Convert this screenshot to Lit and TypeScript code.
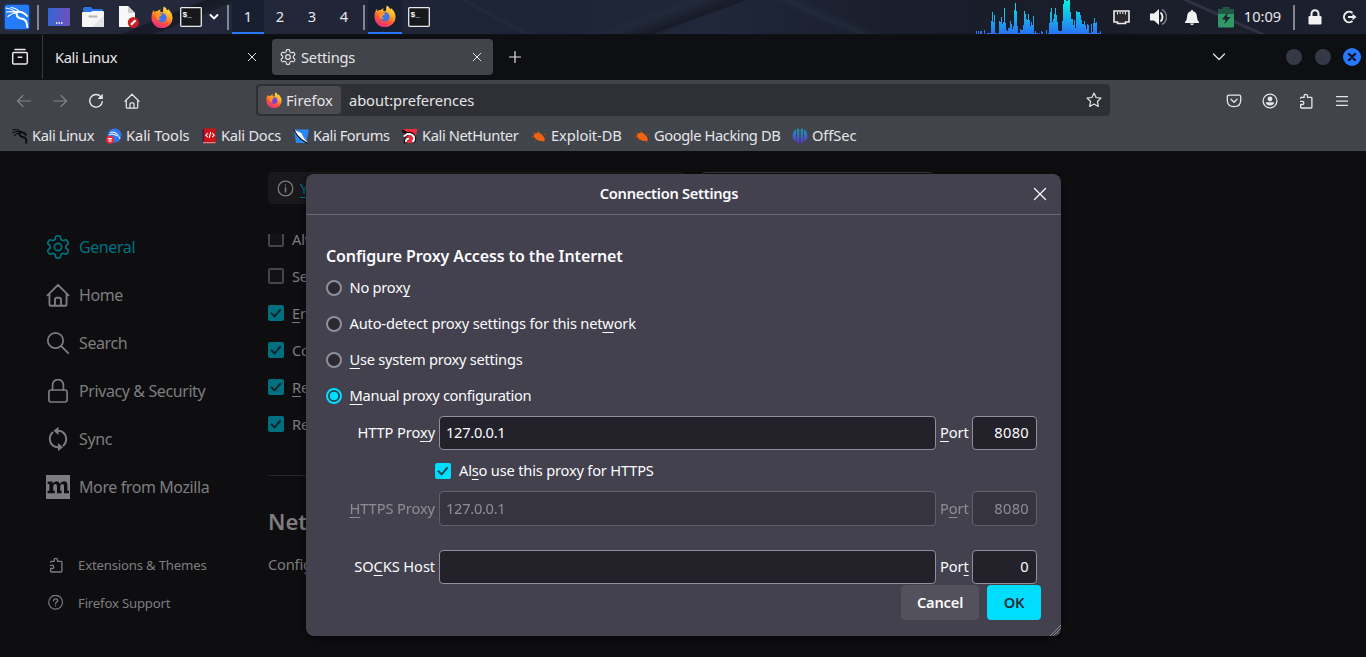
import { LitElement, html, css, svg } from "lit";
import { customElement } from "lit/decorators.js";

// Closed outline of a six-toothed gear, centred on (12, 12).
const gearPath = (() => {
  const pts: string[] = [];
  for (let i = 0; i < 120; i++) {
    const a = (i / 120) * Math.PI * 2 - Math.PI / 2;
    const c = Math.cos(6 * (a + Math.PI / 2));
    const r = 9.5 + 1.6 * Math.tanh(2.6 * (c + 0.1));
    pts.push(`${(12 + r * Math.cos(a)).toFixed(2)} ${(12 + r * Math.sin(a)).toFixed(2)}`);
  }
  return "M" + pts.join("L") + "Z";
})();

const icon = (size: number, body: unknown, box = 16) =>
  html`<svg class="ic" width=${size} height=${size} viewBox="0 0 ${box} ${box}" fill="none" stroke="currentColor" stroke-width="1.4" stroke-linecap="round" stroke-linejoin="round">${body}</svg>`;

const gear = svg`<path d=${gearPath} stroke-width="1.7"/><circle cx="12" cy="12" r="3.6" stroke-width="1.7"/>`;
const house = svg`<path d="M1 8.2 8 1.2l7 7M2.3 7v7.3q0 .9.9.9h9.6q.9 0 .9-.9V7M6 15v-4q0-1.2 1.2-1.2h1.6Q10 9.8 10 11v4" stroke-width="1.25"/>`;
const puzzle = svg`<path d="M2.6 5.2q0-.8.8-.8H6.1V3a1.7 1.7 0 0 1 3.4 0v1.4h3.6q.8 0 .8.8v9q0 .8-.8.8H3.4q-.8 0-.8-.8v-2.7h1.7a1.5 1.5 0 0 0 0-3.1H2.6" stroke-width="1.3"/>`;
const cross = svg`<path d="m3.6 3.6 8.8 8.8m0-8.8-8.8 8.8" stroke-width="1"/>`;
const tabCross = svg`<path d="m4.2 4.2 7.600 7.600m0-7.600-7.600 7.600" stroke-width="1"/>`;
const tick = svg`<path d="m3.6 8.4 3 3 5.6-6.6" stroke-width="2"/>`;
const dragon = svg`<path d="M.6 1.600q5.500-.6 8.400 2M.4 4.800q4-2 8-.8M2 7.800q2.600-3 6-2.600" stroke-width="1.100"/><path d="M7.500 4.500q-.6 3.200 2 4.200 4.300.5 4.800 3.300.2 1.800-.3 3.500M8 4q4 .1 6.500 3.300" stroke-width="1.900"/>`;

const firefox = (size: number) => html`<svg class="ic" width=${size} height=${size} viewBox="0 0 24 24">
  <defs>
    <linearGradient id="fx" x1=".8" y1="0" x2=".3" y2="1"><stop offset="0" stop-color="#ffe84a"/><stop offset=".38" stop-color="#ffab28"/><stop offset=".65" stop-color="#ff5a32"/><stop offset="1" stop-color="#e6278b"/></linearGradient>
  </defs>
  <path d="M14 .5c2 1.200 3.200 2.700 3.800 4.400.6-.2.8-.8.8-1.500 3 2.700 5 6 4.900 9.600A11.500 11 0 0 1 .5 13.500C.4 9.500 1.300 6.600 3 4.300l.8 2.200c1-.9 2.200-1.200 3.500-1 .8-1 1.900-1.700 3.100-2l-.6 2.400c1.500.2 2.400.8 2.700 1.300C13.500 5.800 13 2.500 14 .5Z" fill="url(#fx)"/>
  <circle cx="12" cy="12.800" r="5" fill=${size > 16 ? "#3f74ea" : "#7a3fe0"}/><path d="M4.500 8.500c2-1.500 5-1 7.500 1-.3 1.700-2.200 1.300-3 2.500-.4 1.400.5 2.500 1.800 3-2.800 1.400-6.300-2-6.300-6.500Z" fill="#ff9329"/>
</svg>`;

const terminal = html`<svg class="ic" width="22" height="20" viewBox="0 0 22 20"><rect x=".7" y=".7" width="20.600" height="18.600" rx=".8" fill="#17181b" stroke="#e9e9e9" stroke-width="1.300"/><text x="2.500" y="10" font-size="8" font-weight="700" font-family="Liberation Mono, monospace" fill="#fff">$_</text></svg>`;

const GRAPH = [
  3, 0, 3, 0, 3, 3, 0, 0, 4, 0, 0, 1, 1, 1, 1, 13, 22, 12, 19, 1, 1, 0, 1, 13, 12, 17, 10, 12, 26, 11, 4, 3, 6, 6, 13,
  10, 5, 8, 24, 31, 23, 8, 1, 1, 5, 4, 4, 9, 23, 20, 15, 14, 20, 14, 8, 12, 9, 18, 1, 3, 1, 1, 0, 1, 0, 3, 2, 0, 0, 0,
  4, 0, 1, 11, 22, 26, 12, 15, 20, 26, 19, 12, 4, 3, 3, 3, 13, 30, 34, 34, 34, 34, 34, 34, 22, 15, 15, 9, 14, 6, 23,
  22, 22, 22, 19, 14, 10, 10, 13, 9, 5, 10, 9, 1, 1, 10, 2, 11, 16, 11, 12, 1, 1, 1, 3,
];

const base = css`
  :host { display: block; font-family: "Noto Sans", "Open Sans", sans-serif; font-size: 14.67px; line-height: 20px; letter-spacing: -.2px; }
  * { box-sizing: border-box; }
  .ic { display: block; flex: none; }
  .t { padding-bottom: 2px; }
  .tight { letter-spacing: -.4px; }
  .loose { letter-spacing: -.08px; }
`;

@customElement("desktop-panel")
class DesktopPanel extends LitElement {
  static styles = [base, css`
    .bar { height: 35px; display: grid; align-items: center; justify-items: center; color: #e6e7ea; letter-spacing: 0;
      grid-template-columns: 34px 8px 34px 34px 36px 32px 26px 20px 8px repeat(4, 32px) 8px 34px 34px 1fr 125px 40px 34px 34px 34px 39px 24px 18px 42px;
      border-bottom: 1px solid #101218;
      background:
        linear-gradient(158deg, transparent 48%, #171a25 50%, #1a1e2a 60%, transparent 62%) 70px 0 / 190px 35px no-repeat,
        linear-gradient(28deg, transparent 48%, #39404f33 50%, transparent 54%) 420px 0 / 150px 35px no-repeat,
        linear-gradient(160deg, transparent 40%, #2b344633 46%, #171b26 60%, transparent 62%) 560px 0 / 210px 35px no-repeat,
        linear-gradient(24deg, transparent 44%, #343b4c44 50%, transparent 58%) 740px 0 / 170px 35px no-repeat,
        linear-gradient(204deg, transparent 47%, #59607066 50%, transparent 53%) 1170px 0 / 110px 35px no-repeat,
        linear-gradient(90deg, #252a3a, #22273a 18%, #1d2435 38%, #202739 52%, #191e2c 66%, #1a1d29 80%, #1c2130); }
    .sep { width: 2px; height: 25px; background: #83868e; }
    .ws { align-self: stretch; width: 100%; display: grid; place-items: center; padding-bottom: 2px; }
    .on { background: #171f31; box-shadow: inset 0 -2px #2777ff; }
    .graph { align-self: start; }
    .out { justify-self: start; margin-left: 18px; }
    .doc { margin-left: 1px; }
  `];
  render() {
    return html`<div class="bar">
      <svg class="ic" width="28" height="28" viewBox="0 0 28 28"><defs><filter id="g"><feGaussianBlur stdDeviation="1.200"/></filter></defs><rect x="2" y="2" width="24" height="24" rx="2" fill="#1765e8" filter="url(#g)"/><rect x="2" y="2" width="24" height="24" rx="1.500" fill="#247cfc"/><g fill="none" stroke="#fff" stroke-linecap="round"><path d="M3 5q6 .8 10 4M3.500 9q5-1 9.500.5M5 13.500q4-3.500 8.500-3.500M8 4.500q5 .5 8 4" stroke-width="1.200"/><path d="M14 9q-1.500 5 3 6.200 5.500.6 6.500 4.300.6 2.500.8 4.500M14 8.700q6.500-.6 10 4.300" stroke-width="2"/></g></svg>
      <span class="sep"></span>
      <svg class="ic" width="22" height="18" viewBox="0 0 22 18"><defs><linearGradient id="d"><stop stop-color="#3465d6"/><stop offset="1" stop-color="#7050bd"/></linearGradient></defs><rect width="22" height="18" rx="1" fill="url(#d)"/><path d="M8 15h1.500m1 0H12m1 0h1.500" stroke="#fff" stroke-width="1.300"/></svg>
      <svg class="ic" width="22" height="20" viewBox="0 0 22 20"><path d="M1 8V1.500Q1 0 2.500 0H9l2 2h8.500Q21 2 21 3.500V8Z" fill="#2b73e0"/><path d="M0 6q0-1 1-1h8l1.500-1H21q1 0 1 1v14q0 1-1 1H1q-1 0-1-1Z" fill="#f6f6f6"/><path d="M22 8v11q0 1-1 1H10Z" fill="#e4e4e4"/><path d="M7.500 9.500h7" stroke="#b4b4b4" stroke-width="2" stroke-linecap="round"/></svg>
      <svg class="ic doc" width="21" height="22" viewBox="0 0 21 22"><path d="M1 0h9l7 7v14H1Z" fill="#f7f7f7"/><path d="m10 0 7 7h-7Z" fill="#cecece"/><circle cx="15.300" cy="16.500" r="5.500" fill="#c92028"/><path d="m13 18.800 4.600-4.600" stroke="#fff" stroke-width="2.200"/></svg>
      ${firefox(22)}${terminal}
      <svg class="ic" width="10" height="8" viewBox="0 0 10 8"><path d="m1.500 2 3.500 3.500L8.500 2" stroke="#fff" fill="none" stroke-width="1.900" stroke-linecap="round"/></svg>
      <span class="sep"></span>
      <span class="ws on">1</span><span class="ws">2</span><span class="ws">3</span><span class="ws">4</span>
      <span class="sep"></span>
      <span class="ws on">${firefox(22)}</span>${terminal}
      <span></span>
      <svg class="ic graph" width="125" height="34" viewBox="0 0 125 34" shape-rendering="crispEdges"><defs><linearGradient id="b" gradientUnits="userSpaceOnUse" x1="0" y1="0" x2="0" y2="34"><stop stop-color="#00f5e0"/><stop offset="1" stop-color="#2a72f5"/></linearGradient></defs><g fill="url(#b)">${GRAPH.map((h, i) => svg`<rect x=${i} y=${34 - h} width="1" height=${h}/>`)}</g><rect x="90" width="2" height="1" fill="#173244"/></svg>
      <svg class="ic" width="17" height="15" viewBox="0 0 17 15"><path d="M1 1h15v11h-3.500v1.500h-8V12H1Z" fill="#29272c" stroke="#eee" stroke-width="1.600"/><path d="M4.500 2v2.500m2.600-2.500v2m2.700-2v2m2.600-2v2.500" stroke="#eee" stroke-width="1"/></svg>
      <svg class="ic" width="17" height="18" viewBox="0 0 17 18"><path d="M0 5.500h4L9 1v16l-5-4.500H0Z" fill="#f2f2f2"/><path d="M10.500 4.500a6 6 0 0 1 0 9" stroke="#f2f2f2" stroke-width="1.900" fill="none"/><path d="M12 1.500a8.500 8.500 0 0 1 0 15" stroke="#777b83" stroke-width="1.600" fill="none"/></svg>
      <svg class="ic" width="16" height="17" viewBox="0 0 16 17"><path d="M8 1q1.200 0 1.300 1.200Q12.800 3 12.900 7.500q.1 4 2.100 5.500v.9H1V13q2-1.500 2.100-5.500Q3.200 3 6.700 2.200 6.800 1 8 1Zm-2 13.600h4q-.5 1.500-2 1.500t-2-1.500Z" fill="#f2f2f2"/></svg>
      <svg class="ic" width="16" height="21" viewBox="0 0 16 21"><path d="M4.500 0h7v2H16v6H0V2h4.500Z" fill="#1f5843"/><path d="M0 7h16v12.500q0 1-1 1H1q-1 0-1-1Z" fill="#2f9865"/><path d="M9.500 5.500 4 12.500h3.500L6.500 17 12.500 10H9Z" fill="#1c2230"/></svg>
      <span class="t">10:09</span><span class="sep"></span>
      <svg class="ic" width="14" height="16" viewBox="0 0 14 16"><path d="M3.500 7V4.800a3.500 3.500 0 0 1 7 0V7" fill="none" stroke="#f2f2f2" stroke-width="2"/><rect x=".5" y="7" width="13" height="8.500" rx="1.200" fill="#f2f2f2"/></svg>
      <svg class="ic out" width="16" height="14" viewBox="0 0 16 14"><path d="M10.500 3A5.200 5.200 0 1 0 10.500 11" fill="none" stroke="#eee" stroke-width="2"/><path d="M6 6h4.500V3.800L14.500 7l-4 3.200V8H6Z" fill="#eee"/></svg>
    </div>`;
  }
}

@customElement("browser-chrome")
class BrowserChrome extends LitElement {
  static styles = [base, css`
    :host { color: #e6e6e8; }
    .tabs { height: 45px; background: #0e0f13; display: grid; align-items: center; grid-template-columns: 42px 1px 229px 221px 44px 1fr 42px 126px; padding-bottom: 1px; }
    .tabs > .ic, .nav > .ic { justify-self: center; }
    .tabs > .all { margin-right: 2px; }
    .line { align-self: stretch; background: #38393d; }
    .tab { height: 36px; display: flex; align-items: center; border-radius: 4px; }
    .first { padding: 0 12px; justify-content: space-between; }
    .current { background: #42444b; padding: 0 8px; gap: 5px; }
    .grow { flex: 1; }
    .wm { display: flex; justify-content: flex-end; align-items: center; gap: 12.5px; padding-right: 5px; }
    .dot { width: 16px; height: 16px; border-radius: 50%; background: #353946; }
    .nav { height: 41px; background: #42444b; display: grid; align-items: center; padding-left: 6px; grid-template-columns: repeat(4, 36px) 106px 854px 106px repeat(4, 36px); }
    .off { color: #828389; }
    .url { height: 32px; background: #2f3035; border-radius: 4px; display: flex; align-items: center; padding: 0 8px 0 2px; margin-top: -1px; letter-spacing: -.06px; }
    .id { background: #4b4a50; width: 83px; height: 28px; border-radius: 3px; display: flex; align-items: center; gap: 4px; padding-left: 8px; margin-right: 8px; letter-spacing: 0; }
    .marks { height: 30px; background: #42444b; display: grid; padding-left: 12px; grid-template-columns: 94px 95px 92px 109px 129px 103px 158px 1fr; }
    .mark { display: flex; align-items: center; gap: 4px; white-space: nowrap; }
    .snug { letter-spacing: -.25px; }
  `];
  render() {
    const bug = icon(16, svg`<path d="m2 5 3 1M1 9l3.500-.5M4 13l2-2M7 3l1 2.500M13 6.500l2-.5M12 13l1 1.500" stroke="#a84a12" stroke-width="1"/><path d="M2.500 7.500Q6 3 9.500 5.500q4 2.500 4.500 7-5 1.500-8-1-3-2-3.500-4Z" fill="#f0640f" stroke="none"/>`);
    const shield = html`<svg class="ic" width="16" height="16" viewBox="0 0 16 16"><path d="M.8 1.500H16l-2.800 13.500H3Z" fill="#2b86f6"/><path d="m1.500 2 7 3.200 2.500 5 4.500 5-6-3.500L4.500 7.500Z" fill="#fff"/><path d="m.8 1.500 3.500 6 4 4 6.500 4" stroke="#15171b" stroke-width="1.100" fill="none"/></svg>`;
    return html`
      <div class="tabs">
        <svg class="ic all" width="18" height="18" viewBox="0 0 18 18" fill="none" stroke="currentColor" stroke-width="1.500" stroke-linecap="round"><path d="M4 1.500h10M2.800 4.600h12.400q1.100 0 1.100 1.100v8.700q0 1.700-1.700 1.700H3.400q-1.700 0-1.700-1.700V5.700q0-1.100 1.100-1.100ZM7.200 9.200h3.600"/></svg>
        <span class="line"></span>
        <div class="tab first"><span class="tight">Kali Linux</span>${icon(16, tabCross)}</div>
        <div class="tab current">${icon(16, gear, 24)}<span class="grow">Settings</span>${icon(16, tabCross)}</div>
        ${icon(16, svg`<path d="M8 2.500v11M2.500 8h11" stroke-width="1.200"/>`)}
        <span></span>
        ${icon(16, svg`<path d="m2.500 5 5.500 5.500L13.500 5" stroke-width="1.200"/>`)}
        <div class="wm"><span class="dot"></span><span class="dot"></span>
          <svg class="ic" width="18" height="18" viewBox="0 0 18 18"><circle cx="9" cy="9" r="9" fill="#2777ff"/><path d="m6 6 6 6m0-6-6 6" stroke="#0c1220" stroke-width="2.400" stroke-linecap="round"/></svg></div>
      </div>
      <div class="nav">
        <svg class="ic off" width="16" height="16" viewBox="0 0 16 16" fill="none" stroke="currentColor" stroke-width="1.200" stroke-linecap="round"><path d="M1.500 8h13M7 2.500 1.500 8 7 13.500"/></svg>
        <svg class="ic off" width="16" height="16" viewBox="0 0 16 16" fill="none" stroke="currentColor" stroke-width="1.200" stroke-linecap="round"><path d="M14.500 8h-13M9 2.500 14.500 8 9 13.500"/></svg>
        ${icon(16, svg`<path d="M12.800 3.700A6.300 6.300 0 1 0 14.300 8.600" stroke-width="1.400"/><path d="M14.800.8V6H9.600Z" fill="currentColor" stroke="none"/>`)}
        ${icon(16, house)}
        <span></span>
        <div class="url"><div class="id">${firefox(16)}<span>Firefox</span></div><span class="grow">about:preferences</span>
          ${icon(16, svg`<path d="m8 1 2.100 4.500 4.900.6-3.600 3.400.9 4.900L8 12l-4.300 2.400.9-4.900L1 6.100l4.900-.6Z" stroke-width="1.200"/>`)}</div>
        <span></span>
        ${icon(16, svg`<path d="M2.800 2.200h10.400q1.500 0 1.500 1.500v3.600q0 6.400-6.700 6.400T1.300 7.300V3.700q0-1.500 1.500-1.500ZM5 6.300 8 9.200l3-2.900" stroke-width="1.300"/>`)}
        ${icon(16, svg`<circle cx="8" cy="8" r="6.900" stroke-width="1.300"/><circle cx="8" cy="5.900" r="2.400" fill="currentColor" stroke="none"/><path d="M3.700 9.300h8.600q-.8 3.200-4.300 3.200T3.700 9.300Z" fill="currentColor" stroke="none"/>`)}
        ${icon(16, puzzle)}
        ${icon(16, svg`<path d="M2.500 3.700h11M2.500 8h11M2.500 12.300h11" stroke-width="1.250"/>`)}
      </div>
      <div class="marks">
        <span class="mark"><svg class="ic" width="16" height="16" viewBox="0 0 16 16" fill="none" stroke="#0c0d10">${dragon}</svg><span class="t tight">Kali Linux</span></span>
        <span class="mark"><svg class="ic" width="16" height="16" viewBox="0 0 16 16"><circle cx="8.500" cy="7.500" r="7" fill="#2b78ef"/><path d="M4 4.500q5-1 7 1.500t3 5M3 7q4-2 8 1" stroke="#d8e8ff" fill="none" stroke-width="1.200"/><circle cx="4" cy="11.700" r="4" fill="#ec2c3c"/><path d="M2 10.500h4M3.200 10.500V14m1.700-3.500V14" stroke="#fff" stroke-width=".9"/></svg><span class="t loose">Kali Tools</span></span>
        <span class="mark"><svg class="ic" width="16" height="16" viewBox="0 0 16 16"><rect x="1.500" y=".5" width="13" height="15" rx="1" fill="#d40f18"/><path d="M1.500 1v14h1.700V1Z" fill="#232a52"/><path d="M2 14.700h12.500" stroke="#b9bcc8" stroke-width=".9"/><path d="M6.800 5 4.800 7.200l2 1.900m4.400-4.100 2 2.200-2 1.900M9.700 4 8.200 10" stroke="#fff" fill="none" stroke-width="1.100"/></svg><span class="t snug">Kali Docs</span></span>
        <span class="mark">${shield}<span class="t tight">Kali Forums</span></span>
        <span class="mark"><svg class="ic" width="16" height="16" viewBox="0 0 16 16"><path d="M1 1h14.500L13 11l-2 4H4Z" fill="#ef2a3c"/><path d="m0 2.500 5 3M1.500 9 6 5.500q4.500-1 6.500 3.500 1 3.500-2 5.500M3.500 15q-1.500-4 3.500-4.500" stroke="#111" stroke-width="3" fill="none"/><path d="M1.500 8.500 5.500 6q4.500-.8 6.500 3 .8 3-1.500 5M4 14q-.5-3 3-3.500" stroke="#fff" stroke-width="1.900" fill="none"/></svg><span class="t tight">Kali NetHunter</span></span>
        <span class="mark">${bug}<span class="t loose">Exploit-DB</span></span>
        <span class="mark">${bug}<span class="t tight">Google Hacking DB</span></span>
        <span class="mark"><svg class="ic" width="16" height="16" viewBox="0 0 16 16"><defs><linearGradient id="o" gradientUnits="userSpaceOnUse" x1="0" y1="0" x2="0" y2="16"><stop stop-color="#159fae"/><stop offset="1" stop-color="#5b2fe0"/></linearGradient></defs><g fill="url(#o)"><path d="M4.100 1.600v11.800Q.6 11.500.6 7.500t3.500-5.900Z"/><rect x="4.900" y=".8" width="2.400" height="14.200" rx="1"/><rect x="8.700" y=".8" width="2.400" height="14.200" rx="1"/><path d="M11.900 1.600v11.800q3.500-1.900 3.500-5.900t-3.500-5.900Z"/></g></svg><span class="t loose">OffSec</span></span>
      </div>`;
  }
}

@customElement("settings-page")
class SettingsPage extends LitElement {
  static styles = [base, css`
    :host { height: 506px; overflow: hidden; background: #0e0e10; color: #7d7d7f; }
    .page { display: grid; grid-template-columns: 268px 665px; }
    .side { padding: 72px 0 0 46px; font-size: 16px; letter-spacing: -.4px; }
    .cat { height: 48px; display: flex; align-items: center; gap: 9px; }
    .sel { color: #007080; }
    .small { height: 38px; display: flex; align-items: center; gap: 14px; font-size: 13.2px; padding-left: 2px; letter-spacing: -.2px; }
    .links { margin-top: 35px; }
    .moz { width: 24px; height: 24px; background: #7d7d7f; }
    .top { display: flex; gap: 16px; margin-top: 21px; height: 32px; }
    .info { width: 417px; background: #19191b; border-radius: 4px; display: flex; align-items: center; gap: 6px; padding-left: 9px; color: #007080; text-decoration: underline; text-underline-offset: 3px; }
    .info .ic { color: #7d7d7f; }
    .find { width: 232px; border: 1px solid #39393d; border-radius: 4px; }
    .list { margin-top: 30px; height: 208px; overflow: hidden; display: flex; flex-direction: column; justify-content: flex-end; }
    .row { height: 37px; flex: none; display: flex; align-items: center; gap: 8px; }
    .box { width: 16px; height: 16px; border-radius: 2px; border: 2px solid #46454d; background: #131217; color: #10222a; flex: none; }
    .yes { border: 0; background: #007080; }
    u { text-underline-offset: 3px; text-decoration-thickness: 1px; }
    .rule { height: 1px; background: #252528; margin-top: 33px; }
    .h { font-size: 22px; font-weight: 600; line-height: 30px; margin: 30px 0 0; letter-spacing: 0; }
    .p { margin-top: 18px; }
  `];
  render() {
    const on = html`<span class="box yes">${icon(16, tick)}</span>`;
    const off = html`<span class="box"></span>`;
    return html`<div class="page">
      <nav class="side">
        <div class="cat sel">${icon(24, gear, 24)}General</div>
        <div class="cat">${icon(24, house)}Home</div>
        <div class="cat">${icon(24, svg`<circle cx="9.500" cy="9.500" r="7.700" stroke-width="1.700"/><path d="m15.200 15.200 7 7" stroke-width="1.900"/>`, 24)}Search</div>
        <div class="cat">${icon(24, svg`<rect x="2.900" y="11" width="18.200" height="12" rx="2.200" stroke-width="1.700"/><path d="M6.600 11V6a5.400 5.400 0 0 1 10.800 0v5" stroke-width="1.700"/>`, 24)}Privacy &amp; Security</div>
        <div class="cat">${icon(24, svg`<path d="M6.500 5.500Q3.800 8 3.800 12t3 6.500q2 1.700 5.200 1.700M17.500 18.500q2.700-2.500 2.700-6.500t-3-6.500q-2-1.700-5.200-1.700" stroke-width="1.900"/><path d="M12.500-.2v8.200L7.500 3.800ZM12 24.200V16l5 4.200Z" fill="currentColor" stroke="none"/>`, 24)}Sync</div>
        <div class="cat"><svg class="ic moz" viewBox="0 0 24 24"><path d="M1.600 6.500h5v2.300Q8 6.200 10.600 6.200q2.600 0 3.300 2.700Q15.200 6.200 18 6.200q3.400 0 3.400 4v5.500H23V18.300h-5v-7q0-2.300-1.400-2.300-2.300 0-2.300 3.200v3.500h1.300v2.600h-4.600v-7q0-2.300-1.400-2.300-2.400 0-2.400 3.200v3.500h1.600v2.600H1.600v-2.600h1.800V9.100H1.600Z" fill="#0e0e10"/></svg>More from Mozilla</div>
        <div class="links">
          <div class="small">${icon(16, puzzle)}Extensions &amp; Themes</div>
          <div class="small">${icon(16, svg`<circle cx="7.600" cy="7.200" r="6.900" stroke-width="1.200"/><path d="M5.500 5.900q.1-2 2.100-2t2.100 1.700q0 1-1.200 1.700-.9.500-.9 1.400m0 2v.1" stroke-width="1.300"/>`)}Firefox Support</div>
        </div>
      </nav>
      <main>
        <div class="top"><div class="info">${icon(17, svg`<circle cx="8" cy="8" r="6.900" stroke-width="1.200"/><path d="M8 7.200v4M8 4.700v.1" stroke-width="1.400"/>`)}Your</div><div class="find"></div></div>
        <div class="list">
          <div class="row">${off}Always</div>
          <div class="row">${off}Search</div>
          <div class="row">${on}<span><u>E</u>nable</span></div>
          <div class="row">${on}Control</div>
          <div class="row">${on}<span><u>R</u>ead</span></div>
          <div class="row">${on}Restore</div>
        </div>
        <div class="rule"></div>
        <h2 class="h">Network</h2>
        <div class="p">Configure</div>
      </main>
    </div>`;
  }
}

@customElement("proxy-dialog")
class ProxyDialog extends LitElement {
  static styles = [base, css`
    :host { width: 755px; height: 462px; background: #42414d; color: #fbfbfe; border-radius: 8px; box-shadow: 0 2px 6px #0008; overflow: hidden; }
    .head { height: 41px; display: grid; grid-template-columns: 13px 1fr 42px; align-items: center; justify-items: center; border-bottom: 1px solid #676670; font-weight: 600; letter-spacing: -.28px; }
    .body { padding: 30px 20px 0; }
    .title { font-size: 16px; font-weight: 600; line-height: 22px; margin: 0 0 3px; letter-spacing: -.11px; }
    .radio { height: 36px; display: flex; align-items: center; gap: 7.6px; }
    .close { letter-spacing: -.27px; }
    .closer { letter-spacing: -.35px; }
    .knob { width: 16px; height: 16px; border-radius: 50%; border: 2px solid #8f8f9d; background: #2b2a33; }
    .picked { border-color: #00ddff; background: radial-gradient(circle, #00ddff 4px, #20404c 4.600px); }
    .field { display: grid; grid-template-columns: 109px 497px 28px 65px; gap: 4px; align-items: center; height: 34px; letter-spacing: -.1px; }
    .first { margin-top: 2px; }
    .dim { height: 35px; opacity: .4; }
    .socks { margin-top: 24px; }
    .label { text-align: right; white-space: nowrap; }
    .input { height: 100%; border: 1px solid #8f8f9d; border-radius: 4px; background: #23222b; display: flex; align-items: center; padding: 0 7px 2px 6px; letter-spacing: -.3px; }
    .port { justify-content: flex-end; letter-spacing: .3px; }
    .share { height: 41px; display: flex; align-items: center; gap: 8px; padding-left: 109px; }
    .check { width: 16px; height: 16px; border-radius: 2px; background: #00ddff; color: #17404e; }
    u { text-underline-offset: 3px; text-decoration-thickness: 1px; }
    .actions { display: flex; justify-content: flex-end; gap: 8px; margin-top: 1px; font-weight: 600; }
    .btn { height: 35px; width: 78px; border-radius: 4px; background: #52515c; display: grid; place-items: center; padding-bottom: 2px; }
    .ok { width: 54px; background: #00ddff; color: #2b2a33; }
    .grip { display: flex; justify-content: flex-end; margin: 4px -20px 0 0; color: #8f8f98; }
  `];
  render() {
    return html`
      <div class="head"><span></span><span class="t">Connection Settings</span>${icon(20, cross, 16)}</div>
      <div class="body">
        <h1 class="title">Configure Proxy Access to the Internet</h1>
        <div class="radio"><span class="knob"></span><span class="t close">No prox<u>y</u></span></div>
        <div class="radio"><span class="knob"></span><span class="t">Auto-detect proxy settings for this net<u>w</u>ork</span></div>
        <div class="radio"><span class="knob"></span><span class="t close"><u>U</u>se system proxy settings</span></div>
        <div class="radio"><span class="knob picked"></span><span class="t closer"><u>M</u>anual proxy configuration</span></div>
        <div class="field first"><span class="label t">HTTP Pro<u>x</u>y</span><span class="input">127.0.0.1</span><span class="label t"><u>P</u>ort</span><span class="input port">8080</span></div>
        <div class="share"><span class="check">${icon(16, tick)}</span><span class="t">Al<u>s</u>o use this proxy for HTTPS</span></div>
        <div class="field dim"><span class="label t"><u>H</u>TTPS Proxy</span><span class="input">127.0.0.1</span><span class="label t">P<u>o</u>rt</span><span class="input port">8080</span></div>
        <div class="field socks"><span class="label t">SO<u>C</u>KS Host</span><span class="input"></span><span class="label t">Por<u>t</u></span><span class="input port">0</span></div>
        <div class="actions"><span class="btn">Cancel</span><span class="btn ok">OK</span></div>
        <div class="grip"><svg class="ic" width="12" height="12" viewBox="0 0 12 12" stroke="currentColor" stroke-width=".9"><path d="M1 12 12 1M4 12l8-8M7 12l5-5M10 12l2-2"/></svg></div>
      </div>`;
  }
}

@customElement("app-root")
class AppRoot extends LitElement {
  static styles = css`
    :host { display: block; width: 1366px; height: 657px; overflow: hidden; background: #0e0e10; }
    .content { position: relative; }
    .modal { position: absolute; left: 306px; top: 23px; }
  `;
  render() {
    return html`<desktop-panel></desktop-panel><browser-chrome></browser-chrome>
      <div class="content"><settings-page></settings-page><proxy-dialog class="modal"></proxy-dialog></div>`;
  }
}
